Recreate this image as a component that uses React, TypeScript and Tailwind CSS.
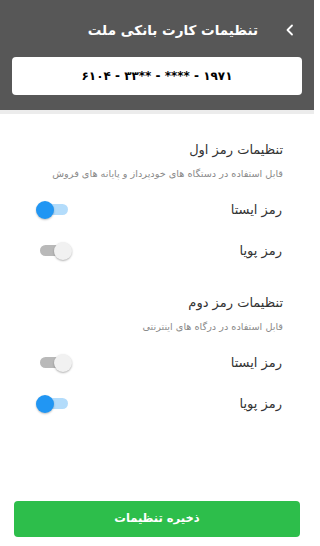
import { useState } from "react";

const FONT = { fontFamily: '"DejaVu Sans", "Noto Sans", sans-serif' };

function Toggle({ on, onChange }: { on: boolean; onChange: () => void }) {
  return (
    <button
      type="button"
      role="switch"
      aria-checked={on}
      onClick={onChange}
      className="relative flex h-[18px] w-[36px] items-center"
    >
      <span
        className={
          on
            ? "mx-[4px] h-[11px] w-[28px] rounded-full bg-[#b3dcfb]"
            : "mx-[4px] h-[11px] w-[28px] rounded-full bg-[#b9b9b9]"
        }
      />
      <span
        className={
          on
            ? "absolute left-0 top-0 size-[18px] rounded-full bg-[#2196f3] shadow-[0_1px_2px_rgba(0,0,0,0.25)]"
            : "absolute right-0 top-0 size-[18px] rounded-full bg-[#f1f1f1] shadow-[0_1px_2px_rgba(0,0,0,0.3)]"
        }
      />
    </button>
  );
}

function Row({ label, on, onChange }: { label: string; on: boolean; onChange: () => void }) {
  return (
    <div className="flex h-[41px] items-center justify-between pl-[36px] pr-[32px]">
      <Toggle on={on} onChange={onChange} />
      <span className="text-right text-[13px] text-[#333]">{label}</span>
    </div>
  );
}

function Section({
  title,
  hint,
  values,
  setValues,
}: {
  title: string;
  hint: string;
  values: [boolean, boolean];
  setValues: (v: [boolean, boolean]) => void;
}) {
  return (
    <section>
      <div className="pr-[31px] text-right">
        <p className="text-[13px] font-medium leading-[22px] text-[#333]">{title}</p>
        <p className="mt-[4px] text-[9.7px] leading-[18px] text-[#8a8a8a]">{hint}</p>
      </div>
      <div className="mt-[6px]">
        <Row label="رمز ایستا" on={values[0]} onChange={() => setValues([!values[0], values[1]])} />
        <Row label="رمز پویا" on={values[1]} onChange={() => setValues([values[0], !values[1]])} />
      </div>
    </section>
  );
}

export default function App() {
  const [first, setFirst] = useState<[boolean, boolean]>([true, false]);
  const [second, setSecond] = useState<[boolean, boolean]>([false, true]);

  return (
    <div style={FONT} className="flex h-[546px] w-[314px] flex-col bg-white">
      <header className="bg-[#575757] px-[12px] pb-[15px] pt-[18px]">
        <div className="flex h-[24px] items-center justify-end gap-[28px] pr-[8px]">
          <h1 className="text-[13.5px] font-bold text-white">تنظیمات کارت بانکی ملت</h1>
          <svg width="8" height="12" viewBox="0 0 8 12" className="shrink-0" aria-hidden>
            <path d="M6 1.5 1.5 6 6 10.5" fill="none" stroke="#fff" strokeWidth="1.8" strokeLinecap="round" strokeLinejoin="round" />
          </svg>
        </div>
        <div className="mt-[15px] flex h-[38px] items-center justify-center rounded-[4px] bg-white">
          <span className="text-[12px] font-bold text-black">۶۱۰۴ - ۳۳** - **** - ۱۹۷۱</span>
        </div>
      </header>
      <div className="h-[4px] bg-[#ececec]" />

      <main className="flex flex-1 flex-col gap-[21px] pt-[25px]">
        <Section
          title="تنظیمات رمز اول"
          hint="قابل استفاده در دستگاه های خودپرداز و پایانه های فروش"
          values={first}
          setValues={setFirst}
        />
        <Section
          title="تنظیمات رمز دوم"
          hint="قابل استفاده در درگاه های اینترنتی"
          values={second}
          setValues={setSecond}
        />
      </main>

      <div className="px-[14px] pb-[9px]">
        <button
          type="button"
          className="flex h-[36px] w-full items-center justify-center rounded-[4px] bg-[#2dbe4b] text-[11.5px] font-bold text-white"
        >
          ذخیره تنظیمات
        </button>
      </div>
    </div>
  );
}
